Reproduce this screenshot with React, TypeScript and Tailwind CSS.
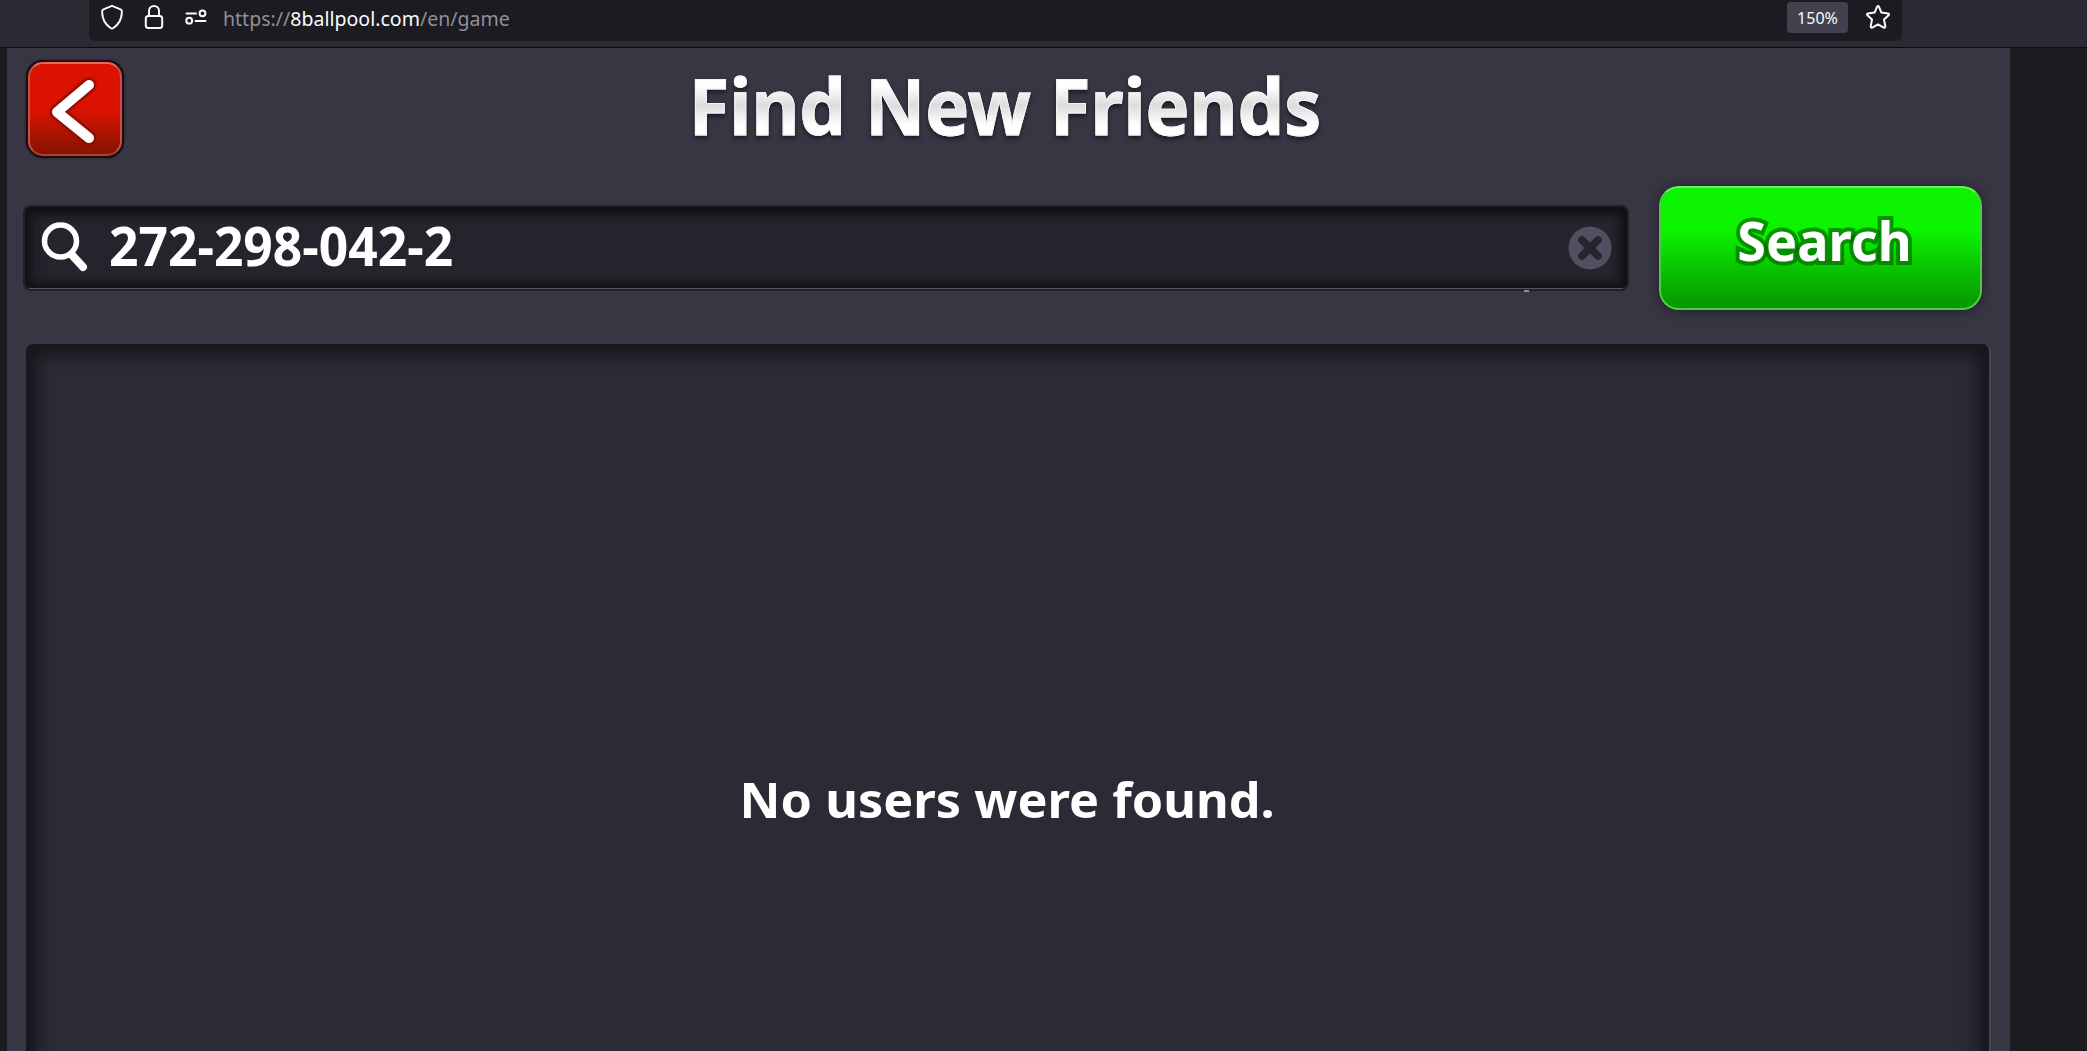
import type { ReactNode } from 'react';

const Shield = () => (
  <svg width="24" height="28" viewBox="0 0 24 28" fill="none" stroke="#fbfbfe" strokeWidth="2" strokeLinejoin="round">
    <path d="M12 2.8 L20.6 6.4 Q22 7 21.9 8.8 C21.8 15 19 21.3 13.4 25 Q12 25.8 10.6 25 C5 21.3 2.2 15 2.1 8.8 Q2 7 3.4 6.4 Z" />
  </svg>
);

const Lock = () => (
  <svg width="20" height="28" viewBox="0 0 20 28" fill="none" stroke="#fbfbfe" strokeWidth="2">
    <rect x="1.8" y="13" width="16.4" height="12" rx="2.5" />
    <path d="M5 13 V8 C5 1.3 15 1.3 15 8 V13" />
  </svg>
);

const Permissions = () => (
  <svg width="22" height="18" viewBox="0 0 22 18" fill="none" stroke="#fbfbfe" strokeWidth="2" strokeLinecap="round">
    <path d="M1.5 4.5 H11" />
    <circle cx="17.5" cy="4.3" r="2.9" />
    <circle cx="4.2" cy="11.7" r="2.9" />
    <path d="M10.5 12 H20.5" />
  </svg>
);

const Star = () => (
  <svg width="26" height="26" viewBox="0 0 26 26" fill="none" stroke="#fbfbfe" strokeWidth="2" strokeLinejoin="round">
    <path d="M12 2.8 Q13 1.3 14 2.8 L16.4 8.6 L23 9.4 Q24.8 9.9 23.6 11.3 L19 15.6 L20.3 22.2 Q20.3 24.2 18.7 23.6 L13 20.4 L7.3 23.6 Q5.7 24.2 5.7 22.2 L7 15.6 L2.4 11.3 Q1.2 9.9 3 9.4 L9.6 8.6 Z" />
  </svg>
);

function BrowserBar() {
  return (
    <header className="flex h-12 shrink-0 border-b border-[#0c0c0d] bg-[#2b2a33] pl-[89px]">
      <div className="flex h-[41px] w-[1813px] items-start rounded-b-md bg-[#1c1b22] pl-[11px]">
        <div className="mt-[3px]"><Shield /></div>
        <div className="mt-[3px] ml-5"><Lock /></div>
        <div className="mt-[9px] ml-[21px]"><Permissions /></div>
        <p className="ml-4 mt-[5px] h-7 w-[300px] whitespace-nowrap text-[19.55px] leading-7 text-[#8f8f96]">
          https://<span className="text-[#fbfbfe]">8ballpool.com</span>/en/game
        </p>
        <div className="mt-[2px] ml-auto flex h-[31px] w-[61px] items-center justify-center rounded bg-[#42414d] pt-px text-[16px] text-[#fbfbfe]">
          150%
        </div>
        <div className="mt-[4px] mr-[11px] ml-[17px]"><Star /></div>
      </div>
    </header>
  );
}

function BackButton() {
  return (
    <button className="h-[98px] w-[98px] shrink-0 rounded-[17px] bg-[#1b0d12] p-[2px] shadow-[0_0_2px_#1b0d12]">
      <span className="flex h-full w-full items-center justify-center rounded-[15px] border-2 border-[#c4524a] border-t-[#e8665c] border-b-[#a84434] bg-linear-to-b from-[#dc1200] from-50% to-[#861300]">
        <svg width="90" height="90" viewBox="0 0 90 90" fill="none" strokeLinecap="round" strokeLinejoin="round">
          <path d="M59 21 L27 48 L59 74" stroke="#7c0b04" strokeOpacity="0.45" strokeWidth="16" />
          <path d="M59 21 L27 48 L59 74" stroke="#7c0b04" strokeOpacity="0.5" strokeWidth="13" />
          <path d="M59 21 L27 48 L59 74" stroke="#fff" strokeWidth="10" />
        </svg>
      </span>
    </button>
  );
}

function Stretch({ className, children }: { className: string; children: ReactNode }) {
  return <span className={`inline-block whitespace-nowrap font-bold leading-none ${className}`}>{children}</span>;
}

function SearchField() {
  return (
    <div className="relative mt-[19px] flex h-[86px] w-[1606px] items-center rounded-lg border-2 border-b-[3px] border-[#202026] bg-[#25242d] shadow-[inset_0_6px_8px_#101014,inset_7px_0_12px_#15151a,inset_-7px_0_10px_#15151a,inset_0_-4px_7px_#15151a]">
      <svg className="ml-[15px]" width="50" height="54" viewBox="0 0 50 54" fill="none" stroke="#fff">
        <circle cx="20.5" cy="20" r="16" strokeWidth="5.5" />
        <path d="M32 34 L43 46" strokeWidth="8" strokeLinecap="round" />
      </svg>
      <Stretch className="mb-[3px] ml-[19px] origin-left scale-x-[0.963] text-[53.5px] text-white">272-298-042-2</Stretch>
      <svg className="mr-[15px] ml-auto" width="44" height="44" viewBox="0 0 44 44">
        <circle cx="22" cy="22" r="21.5" fill="#514f61" />
        <path d="M14 14 L30 30 M30 14 L14 30" stroke="#25242f" strokeWidth="7.5" strokeLinecap="round" />
      </svg>
      <i className="absolute -bottom-px left-1 h-px w-[1594px] bg-[#55535b]" />
      <i className="absolute -bottom-[4px] left-[1499px] h-[2px] w-[5px] bg-[#918f98]" />
    </div>
  );
}

export default function App() {
  return (
    <div className="flex h-[1051px] w-[2087px] flex-col overflow-hidden bg-[#1c1b1f] font-['Noto_Sans','Open_Sans',sans-serif]">
      <BrowserBar />
      <main className="ml-[7px] flex w-[2003px] grow flex-col bg-[#383643]">
        <div className="flex h-[138px] shrink-0 pt-3 pl-[19px]">
          <BackButton />
          <div className="flex grow justify-center pr-[123px]">
            <h1 className="pt-[7px]">
              <Stretch className="scale-x-[0.958] bg-linear-to-b from-white from-25% via-[#dcdcdc] via-50% to-white to-75% bg-clip-text text-[77px] text-transparent drop-shadow-[0_3px_2px_#1d1b25] [-webkit-text-stroke:1px_#f4f4f4]">
                Find New Friends
              </Stretch>
            </h1>
          </div>
        </div>
        <div className="flex h-[158px] shrink-0 pl-4">
          <SearchField />
          <button className="ml-[30px] flex h-[124px] w-[323px] justify-center rounded-[20px] border-2 border-[#4fc94a] border-t-[#68f35e] bg-linear-to-b from-[#0cf400] from-35% to-[#079c00] to-95% pt-[26px] pl-[9px] shadow-[0_1px_7px_3px_#2a2832]">
            <Stretch className="h-[60px] scale-x-[0.985] text-[53px] text-white [-webkit-text-stroke:8px_rgba(4,100,0,0.65)] [paint-order:stroke_fill]">Search</Stretch>
          </button>
        </div>
        <section className="-mb-12 ml-[19px] flex w-[1965px] grow justify-center rounded-t-lg border-r-2 border-[#45444a] bg-[#2d2a36] pt-[432px] shadow-[inset_0_10px_16px_#18171d,inset_12px_0_16px_#1a191f,inset_-12px_0_16px_#1c1a22]">
          <Stretch className="scale-x-[1.061] text-[47.5px] text-white">No users were found.</Stretch>
        </section>
      </main>
    </div>
  );
}
